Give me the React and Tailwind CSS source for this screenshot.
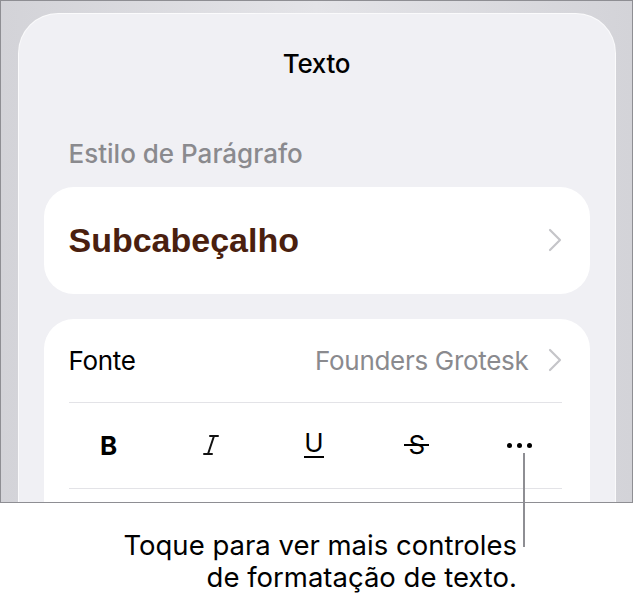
import React from 'react';

const Chevron = () => (
  <svg width="14" height="24" viewBox="0 0 14 24" fill="none">
    <path d="M2 2 L12 12 L2 22" stroke="#c5c5c9" strokeWidth="2.2" strokeLinecap="round" strokeLinejoin="round" />
  </svg>
);

const ItalicIcon = () => (
  <svg width="18" height="22" viewBox="0 0 18 22" fill="none">
    <path d="M8 2 H16 M2 20 H10 M12 2 L6 20" stroke="#111" strokeWidth="2" strokeLinecap="round" />
  </svg>
);

const App = () => {
  return (
    <div className="w-[633px] h-[599px] bg-white overflow-hidden" style={{ fontFamily: 'Inter, "Noto Sans", sans-serif' }}>
      {/* device frame */}
      <div className="h-[503px] border-[1.5px] border-[#8e8e93] bg-gradient-to-r from-[#d3d3d8] via-[#e4e4e8] to-[#d3d3d8] pt-[11.5px] px-[16.5px] overflow-hidden">
        <div className="h-full rounded-t-[40px] bg-[#f0f0f4] pt-[35px] px-[25px] border-t border-x border-white/70">
          <div className="text-center text-[26px] font-medium text-black leading-[30px] tracking-[-0.3px]">Texto</div>

          <div className="mt-[60px] pl-[25px] text-[26px] font-medium text-[#8a8a8e] leading-[30px]">Estilo de Parágrafo</div>

          <div className="mt-[18px] h-[107px] rounded-[30px] bg-white flex items-center justify-between pl-[25px] pr-[28px]">
            <span className="text-[34px] font-bold text-[#4a1f0f]" style={{ fontFamily: '"Liberation Sans", Arial, sans-serif' }}>
              Subcabeçalho
            </span>
            <Chevron />
          </div>

          <div className="mt-[25px] rounded-t-[30px] bg-white pl-[25px] pr-[28px] h-[200px]">
            <div className="h-[84px] flex items-center justify-between border-b border-[#e3e3e7]">
              <span className="text-[26px] text-black tracking-[-0.3px]">Fonte</span>
              <div className="flex items-center gap-[19px]">
                <span className="text-[26px] text-[#8a8a8e] tracking-[-0.3px]">Founders Grotesk</span>
                <Chevron />
              </div>
            </div>
            <div className="h-[86px] flex items-center justify-between border-b border-[#e3e3e7] pl-[20px] pr-[22px]">
              <span className="w-[40px] text-center text-[26px] font-bold text-black">B</span>
              <span className="w-[40px] flex justify-center">
                <ItalicIcon />
              </span>
              <span className="w-[40px] flex justify-center">
                <span className="text-[26px] text-black border-b-[2px] border-black leading-[22px] pb-[2px]">U</span>
              </span>
              <span className="w-[40px] flex justify-center">
                <span className="relative text-[26px] text-black leading-[30px]">
                  S
                  <span className="absolute left-[-4px] right-[-4px] top-[14px] h-[2px] bg-black" />
                </span>
              </span>
              <span className="w-[40px] flex justify-center gap-[5px]">
                <span className="w-[5px] h-[5px] rounded-full bg-black" />
                <span className="w-[5px] h-[5px] rounded-full bg-black" />
                <span className="w-[5px] h-[5px] rounded-full bg-black" />
              </span>
            </div>
          </div>
        </div>
      </div>

      {/* callout */}
      <div className="relative">
        <div className="absolute left-[523px] top-[-50px] w-[1.5px] h-[94px] bg-[#8e8e93]" />
        <div className="pt-[26px] pr-[116px] text-right text-[27.5px] leading-[32px] text-black">
          <div>Toque para ver mais controles</div>
          <div>de formatação de texto.</div>
        </div>
      </div>
    </div>
  );
};

export default App;
